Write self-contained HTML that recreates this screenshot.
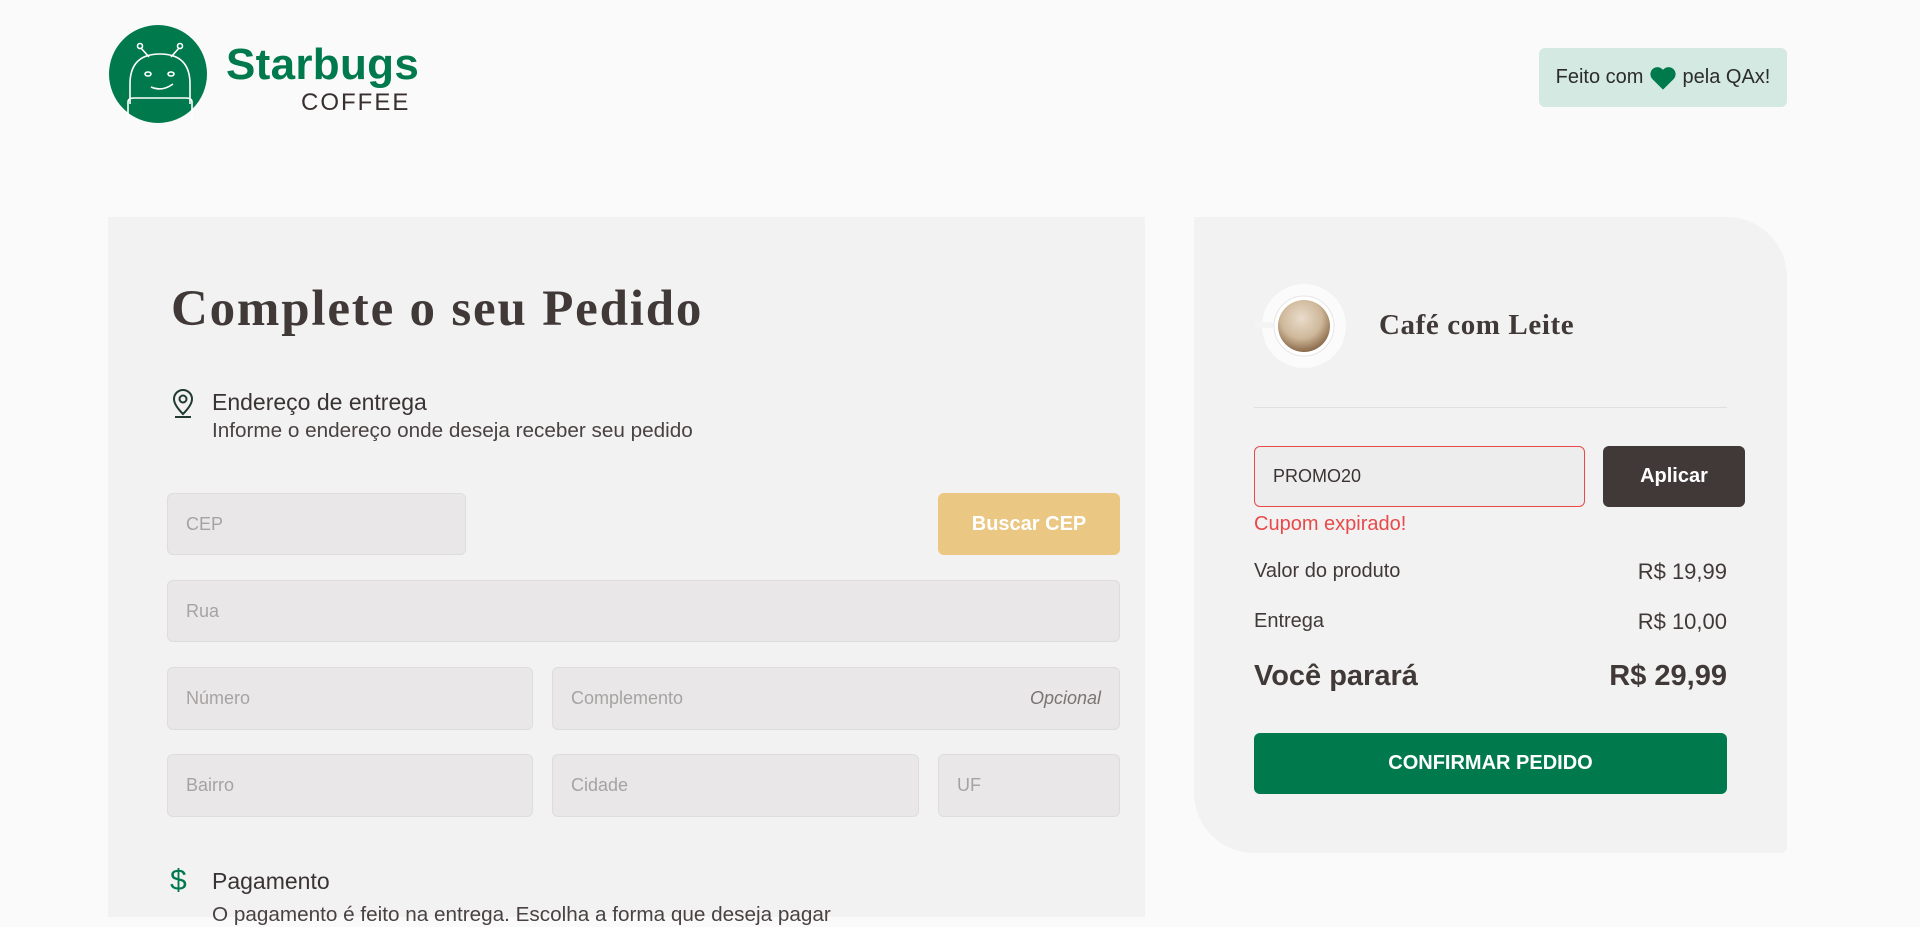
<!DOCTYPE html>
<html><head><meta charset="utf-8"><style>
*{box-sizing:border-box;margin:0;padding:0}
body{width:1920px;height:907px;overflow:hidden;background:#fafafa;font-family:"Liberation Sans",sans-serif;color:#403937;position:relative}
.a{position:absolute}
.inp{position:absolute;background:#e9e7e7;border:1px solid #dedcdc;border-radius:6px;color:#a6a3a3;font-size:18px;padding-left:18px;display:flex;align-items:center}
.slab{font-family:"Liberation Serif","DejaVu Serif",serif;font-weight:bold}
</style></head><body>
<svg class="a" style="left:108px;top:24px" width="100" height="100" viewBox="0 0 100 100">
<circle cx="50" cy="50" r="49" fill="#007a4d"/>
<g fill="none" stroke="#fff" stroke-width="1.6">
<circle cx="32" cy="22" r="2.5"/><circle cx="72" cy="22" r="2.5"/>
<path d="M33 24 L41 33 M71 24 L63 33"/>
<path d="M22 80 V60 Q22 30 52 30 Q82 30 82 60 V80"/>
<path d="M20 97 V78 Q20 74 26 74 H78 Q84 74 84 78 V97"/>
<ellipse cx="40" cy="50" rx="3" ry="2"/><ellipse cx="63" cy="50" rx="3" ry="2"/>
<path d="M43 63 Q54 68 65 60"/>
</g></svg>
<div class="a" style="left:226px;top:40px;font-size:44px;font-weight:bold;color:#007a4d;letter-spacing:0.3px">Starbugs</div>
<div class="a" style="left:301px;top:89px;font-size:24px;color:#3a2f2f;letter-spacing:2px">COFFEE</div>
<div class="a" style="left:1539px;top:48px;width:248px;height:59px;background:#d3e9e1;border-radius:6px;font-size:20px;display:flex;align-items:center;justify-content:center;color:#2c2c2c">Feito com&nbsp;<svg width="28" height="26" viewBox="0 0 24 22"><path d="M12 21 L2.5 11.5 A5.5 5.5 0 0 1 12 4 A5.5 5.5 0 0 1 21.5 11.5 Z" fill="#007a4d"/></svg>&nbsp;pela QAx!</div>

<div class="a" style="left:108px;top:217px;width:1037px;height:700px;background:#f2f2f2"></div>
<div class="a slab" style="left:171px;top:280px;font-size:51px;letter-spacing:1.8px;color:#403937">Complete o seu Pedido</div>
<svg class="a" style="left:170px;top:388px" width="26" height="30" viewBox="0 0 26 30"><g fill="none" stroke="#1f3b2f" stroke-width="2"><path d="M13 26 Q4 17 4 11 A9 9 0 0 1 22 11 Q22 17 13 26Z"/><circle cx="13" cy="11" r="3.5"/><path d="M5 29 H21"/></g></svg>
<div class="a" style="left:212px;top:389px;font-size:23px;color:#3a3333">Endereço de entrega</div>
<div class="a" style="left:212px;top:419px;font-size:20.7px;color:#4a4242">Informe o endereço onde deseja receber seu pedido</div>
<div class="inp" style="left:167px;top:493px;width:299px;height:62px">CEP</div>
<div class="a" style="left:938px;top:493px;width:182px;height:62px;background:#eac783;border-radius:6px;color:#fff;font-weight:bold;font-size:20px;display:flex;align-items:center;justify-content:center">Buscar CEP</div>
<div class="inp" style="left:167px;top:580px;width:953px;height:62px">Rua</div>
<div class="inp" style="left:167px;top:667px;width:366px;height:63px">Número</div>
<div class="inp" style="left:552px;top:667px;width:568px;height:63px">Complemento<span style="position:absolute;right:18px;font-style:italic;color:#7a7474">Opcional</span></div>
<div class="inp" style="left:167px;top:754px;width:366px;height:63px">Bairro</div>
<div class="inp" style="left:552px;top:754px;width:367px;height:63px">Cidade</div>
<div class="inp" style="left:938px;top:754px;width:182px;height:63px">UF</div>
<div class="a" style="left:170px;top:864px;font-size:30px;color:#007a4d">$</div>
<div class="a" style="left:212px;top:868px;font-size:23px;color:#3a3333">Pagamento</div>
<div class="a" style="left:212px;top:903px;font-size:20.7px;color:#4a4242">O pagamento é feito na entrega. Escolha a forma que deseja pagar</div>

<div class="a" style="left:1194px;top:217px;width:593px;height:636px;background:#f2f2f2;border-radius:0 60px 6px 60px"></div>
<svg class="a" style="left:1252px;top:282px" width="100" height="90" viewBox="0 0 100 90">
<defs><radialGradient id="c" cx="45%" cy="35%" r="65%"><stop offset="0" stop-color="#e9dccb"/><stop offset=".6" stop-color="#cfb89a"/><stop offset="1" stop-color="#8a6a4a"/></radialGradient></defs>
<circle cx="52" cy="44" r="42" fill="#fbfbfb"/>
<rect x="2" y="40" width="20" height="6" rx="3" fill="#f4f4f4"/>
<circle cx="52" cy="44" r="30" fill="#fff" stroke="#e6e6e6"/>
<circle cx="52" cy="44" r="26" fill="url(#c)"/></svg>
<div class="a slab" style="left:1379px;top:309px;font-size:29px;letter-spacing:0.6px">Café com Leite</div>
<div class="a" style="left:1254px;top:407px;width:473px;height:1px;background:#e0dede"></div>
<div class="a" style="left:1254px;top:446px;width:331px;height:61px;border:1px solid #e84a4a;border-radius:6px;background:#eeeded;font-size:18px;color:#3a3333;display:flex;align-items:center;padding-left:18px">PROMO20</div>
<div class="a" style="left:1603px;top:446px;width:142px;height:61px;background:#403937;border-radius:6px;color:#fff;font-weight:bold;font-size:20px;display:flex;align-items:center;justify-content:center">Aplicar</div>
<div class="a" style="left:1254px;top:513px;font-size:20px;color:#e84a4a">Cupom expirado!</div>
<div class="a" style="left:1254px;top:560px;font-size:20px">Valor do produto</div>
<div class="a" style="right:193px;top:559px;font-size:22px">R$ 19,99</div>
<div class="a" style="left:1254px;top:610px;font-size:20px">Entrega</div>
<div class="a" style="right:193px;top:609px;font-size:22px">R$ 10,00</div>
<div class="a" style="left:1254px;top:660px;font-size:29px;font-weight:bold">Você parará</div>
<div class="a" style="right:193px;top:660px;font-size:29px;font-weight:bold">R$ 29,99</div>
<div class="a" style="left:1254px;top:733px;width:473px;height:61px;background:#007a4d;border-radius:6px;color:#fff;font-weight:bold;font-size:20px;display:flex;align-items:center;justify-content:center">CONFIRMAR PEDIDO</div>
</body></html>
